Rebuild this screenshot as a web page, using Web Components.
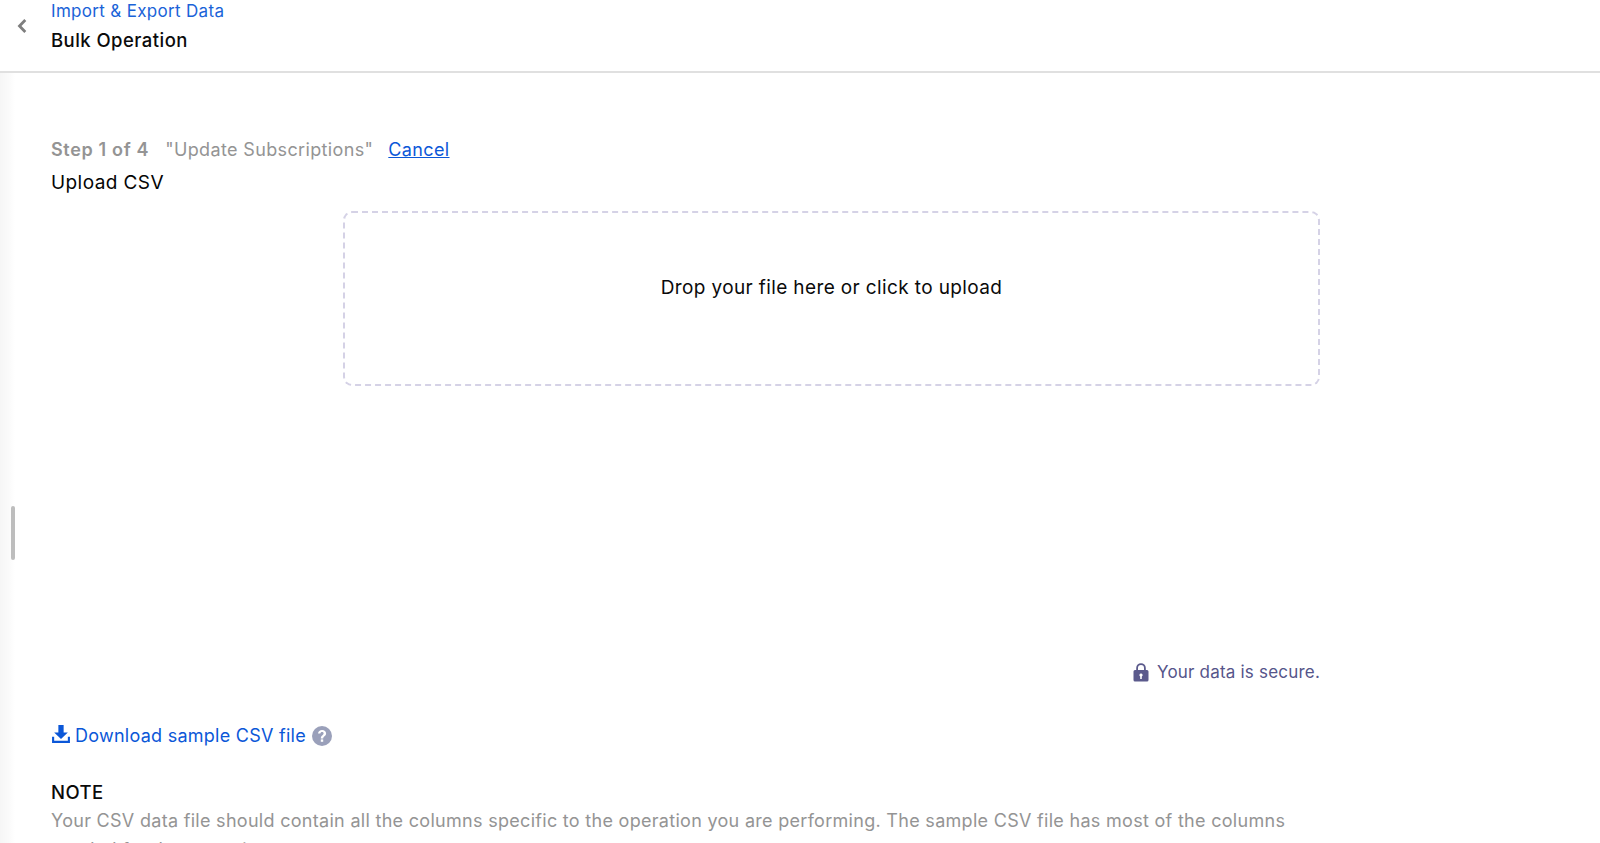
<!DOCTYPE html>
<html lang="en"><head><meta charset="utf-8"><title>Bulk Operation</title>
<style>
html,body{margin:0;height:843px;overflow:hidden;background:#fff}
body{font-family:Inter,"Liberation Sans",sans-serif;color:#000}
</style></head><body>
<bulk-page>
<page-header slot="header" crumb="Import &amp; Export Data" heading="Bulk Operation"></page-header>
<step-title step="Step 1 of 4" op="&quot;Update Subscriptions&quot;" sub="Upload CSV"></step-title>
<drop-zone>Drop your file here or click to upload</drop-zone>
<secure-note>Your data is secure.</secure-note>
<sample-link>Download sample CSV file</sample-link>
<note-block heading="NOTE">Your CSV data file should contain all the columns specific to the operation you are performing. The sample CSV file has most of the columns needed for the operation.</note-block>
</bulk-page>
<script>
function def(name,html,setup){
  customElements.define(name,class extends HTMLElement{
    constructor(){super();this.attachShadow({mode:'open'}).innerHTML=html;}
    connectedCallback(){if(setup)setup(this,this.shadowRoot);}
  });
}
def('bulk-page',`<style>
:host{display:block;position:relative;height:843px;overflow:hidden;background:linear-gradient(90deg,#f6f6f6 0,#fbfbfb 10px,#fff 15px)}
main{display:flex;flex-direction:column;padding:65px 0 0 51px;width:1268px}
.handle{position:absolute;left:11px;top:506px;width:4px;height:54px;border-radius:2px;background:#bdbdbd}
</style><slot name="header"></slot><main><slot></slot></main><div class="handle"></div>`);
def('page-header',`<style>
:host{display:flex;align-items:flex-start;height:73px;box-sizing:border-box;border-bottom:2px solid #e0e0e0;background:#fff}
svg{flex:none;margin:17px 0 0 16px}
.t{margin-left:23px;display:flex;flex-direction:column;padding-top:1px}
.c{font-size:17px;letter-spacing:.32px;line-height:21px;color:#1a63d8}
.h{font-size:18.5px;letter-spacing:.45px;line-height:22px;font-weight:500;color:#0b0b0b;margin-top:7px}
</style><svg width="12" height="18" viewBox="0 0 12 18" fill="none"><path d="M9.300 3 3.500 9 9.300 15" stroke="#7e7e7e" stroke-width="2.800"/></svg>
<div class="t"><div class="c"></div><div class="h"></div></div>`,(e,s)=>{
  s.querySelector('.c').textContent=e.getAttribute('crumb');
  s.querySelector('.h').textContent=e.getAttribute('heading');
});
def('step-title',`<style>
:host{display:block}
.r{display:flex;align-items:baseline;font-size:18px;letter-spacing:.36px;line-height:24px;color:#949494}
b{font-weight:600;letter-spacing:.66px;margin-right:16px}
a{margin-left:15px;color:#0b57d8;text-decoration:underline}
.u{font-size:19px;letter-spacing:.42px;line-height:24px;color:#050505;margin-top:9px}
</style><div class="r"><b></b><span></span><a href="#">Cancel</a></div><div class="u"></div>`,(e,s)=>{
  s.querySelector('b').textContent=e.getAttribute('step');
  s.querySelector('span').textContent=e.getAttribute('op');
  s.querySelector('.u').textContent=e.getAttribute('sub');
});
def('drop-zone',`<style>
:host{display:flex;justify-content:center;box-sizing:border-box;width:977px;height:175px;margin:16px 0 0 292px;padding-top:63px;border:2px dashed #d5d2e6;border-radius:9px;font-size:19px;letter-spacing:.38px;line-height:24px;color:#0a0a0a}
</style><slot></slot>`);
def('secure-note',`<style>
:host{display:flex;justify-content:flex-end;align-items:center;gap:8px;width:1269px;margin-top:274px;height:24px;font-size:17px;letter-spacing:.2px;color:#56558a}
</style><svg width="16" height="19" viewBox="0 0 16 19"><path fill="#5b5a8c" fill-rule="evenodd" d="M3.200 7V5a4.800 4.800 0 0 1 9.600 0v2H14a1.500 1.500 0 0 1 1.500 1.500v8.500A1.500 1.500 0 0 1 14 18.500H2A1.500 1.500 0 0 1 .5 17V8.500A1.500 1.500 0 0 1 2 7zM5 7h6V5a3 3 0 0 0-6 0zm3 3.500a1.600 1.600 0 0 0-.8 3V16h1.600v-2.500a1.600 1.600 0 0 0-.8-3z"/></svg><span><slot></slot></span>`);
def('sample-link',`<style>
:host{display:flex;align-items:center;height:26px;margin-top:38px;font-size:18px;letter-spacing:.26px;color:#0b57d8}
.d{flex:none;margin-right:4px;margin-top:-3px}
.q{flex:none;margin-left:6px;margin-top:2px}
</style><svg class="d" width="20" height="20" viewBox="0 0 19 19"><path fill="#0b57d8" d="M7 1h5v7h4l-6.500 6.200L3 8h4zM1 12h2v4h13v-4h2v6H1z"/></svg><slot></slot>
<svg class="q" width="20" height="20" viewBox="0 0 20 20"><circle cx="10" cy="10" r="10" fill="#9aa0ba"/><path d="M6 7.600C6.200 5.300 7.900 4 10.100 4c2.300 0 4 1.300 4 3.400 0 2.700-2.900 2.700-2.900 5H8.800c0-3.300 2.800-3.200 2.800-5 0-.9-.7-1.400-1.600-1.400-1 0-1.500.6-1.700 1.600z" fill="#fff"/><rect x="8.800" y="13.400" width="2.400" height="2.400" fill="#fff"/></svg>`);
def('note-block',`<style>
:host{display:block;margin-top:33px;width:1240px}
h4{margin:0;font-size:18.5px;letter-spacing:.4px;line-height:22px;font-weight:500;color:#0a0a0a}
p{margin:3px 0 0;font-size:18px;letter-spacing:.295px;line-height:29px;color:#949494}
</style><h4></h4><p><slot></slot></p>`,(e,s)=>{s.querySelector('h4').textContent=e.getAttribute('heading');});
</script>
</body></html>
